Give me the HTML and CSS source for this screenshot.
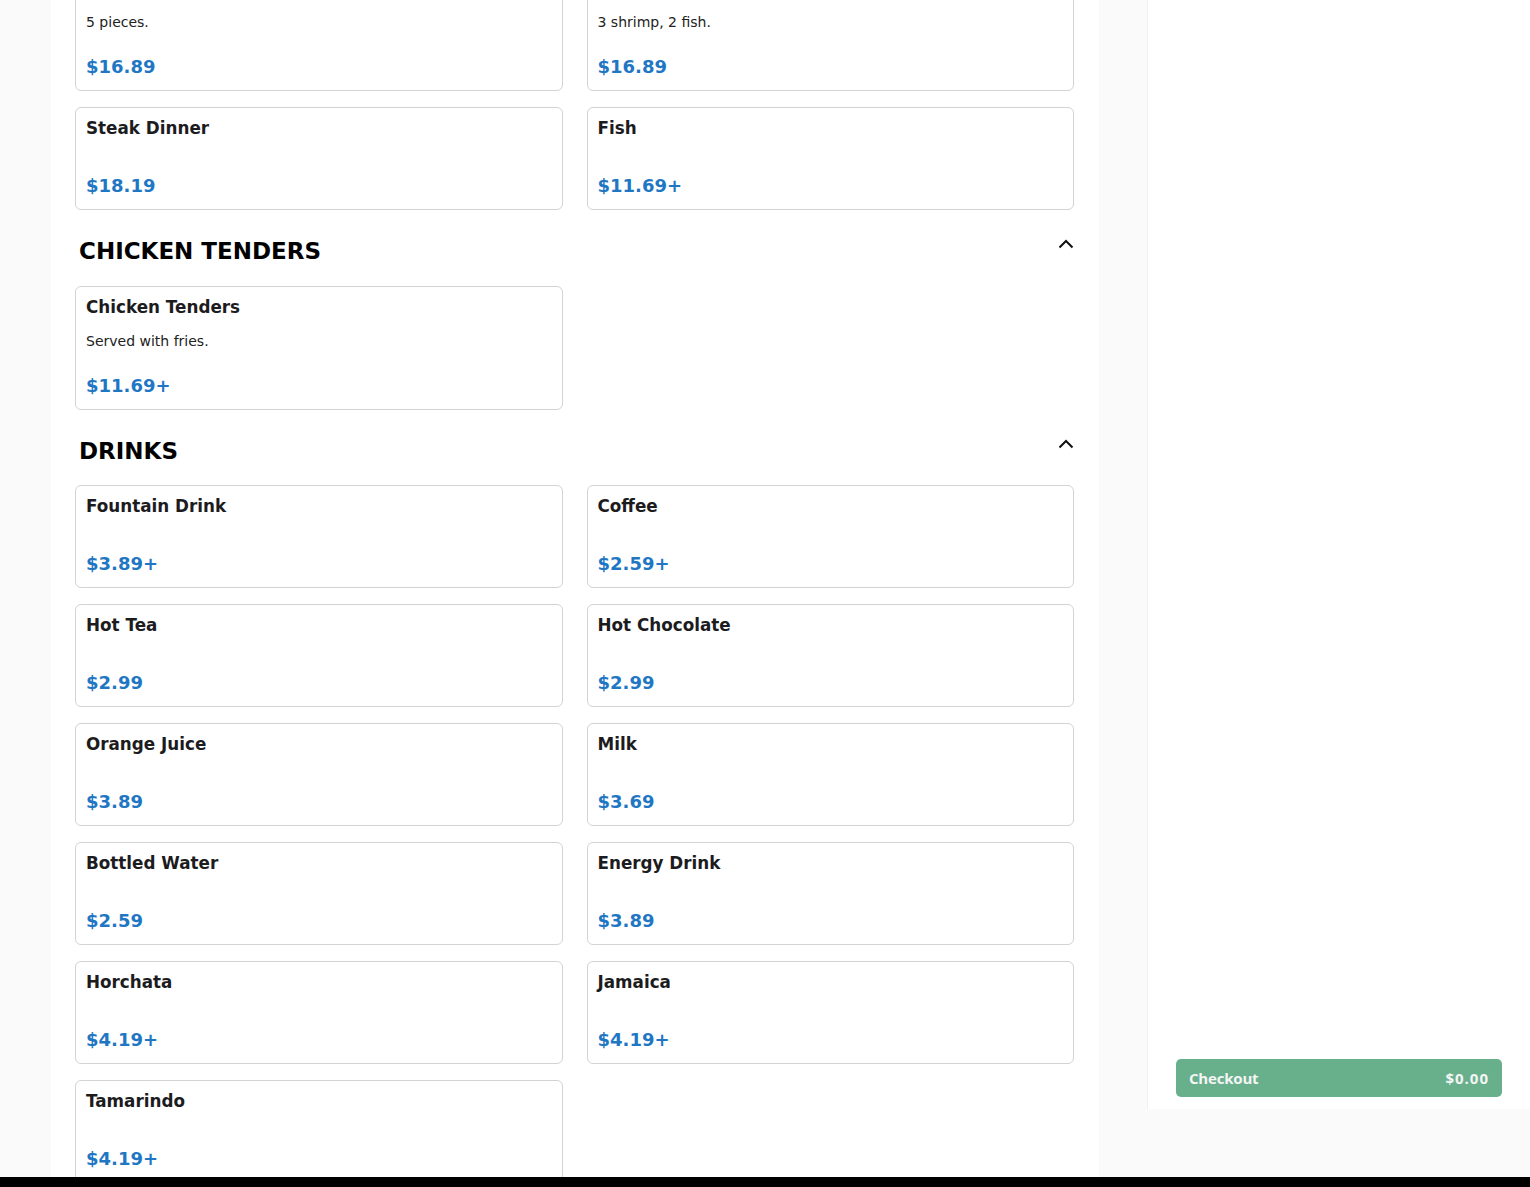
FILE: index.html
```html
<!DOCTYPE html>
<html lang="en">
<head>
<meta charset="utf-8">
<title>Menu</title>
<link rel="stylesheet" href="styles.css">
</head>
<body>
<div class="viewport">
  <div class="layout">
    <main class="menu">
      <div class="grid first">
        <div class="card">
          <div class="title">Shrimp Dinner</div>
          <div class="desc">5 pieces.</div>
          <div class="price">$16.89</div>
        </div>
        <div class="card">
          <div class="title">Combo Dinner</div>
          <div class="desc">3 shrimp, 2 fish.</div>
          <div class="price">$16.89</div>
        </div>
        <div class="card">
          <div class="title">Steak Dinner</div>
          <div class="price">$18.19</div>
        </div>
        <div class="card">
          <div class="title">Fish</div>
          <div class="price">$11.69+</div>
        </div>
      </div>

      <section class="category">
        <div class="cat-head">
          <h2>CHICKEN TENDERS</h2>
          <button class="toggle" aria-label="Collapse"><svg width="16" height="10" viewBox="0 0 16 10"><path d="M1.5 8.5 L8 2 L14.5 8.5" fill="none" stroke="#111" stroke-width="2"/></svg></button>
        </div>
        <div class="grid">
          <div class="card">
            <div class="title">Chicken Tenders</div>
            <div class="desc">Served with fries.</div>
            <div class="price">$11.69+</div>
          </div>
        </div>
      </section>

      <section class="category drinks">
        <div class="cat-head">
          <h2>DRINKS</h2>
          <button class="toggle" aria-label="Collapse"><svg width="16" height="10" viewBox="0 0 16 10"><path d="M1.5 8.5 L8 2 L14.5 8.5" fill="none" stroke="#111" stroke-width="2"/></svg></button>
        </div>
        <div class="grid">
          <div class="card"><div class="title">Fountain Drink</div><div class="price">$3.89+</div></div>
          <div class="card"><div class="title">Coffee</div><div class="price">$2.59+</div></div>
          <div class="card"><div class="title">Hot Tea</div><div class="price">$2.99</div></div>
          <div class="card"><div class="title">Hot Chocolate</div><div class="price">$2.99</div></div>
          <div class="card"><div class="title">Orange Juice</div><div class="price">$3.89</div></div>
          <div class="card"><div class="title">Milk</div><div class="price">$3.69</div></div>
          <div class="card"><div class="title">Bottled Water</div><div class="price">$2.59</div></div>
          <div class="card"><div class="title">Energy Drink</div><div class="price">$3.89</div></div>
          <div class="card"><div class="title">Horchata</div><div class="price">$4.19+</div></div>
          <div class="card"><div class="title">Jamaica</div><div class="price">$4.19+</div></div>
          <div class="card"><div class="title">Tamarindo</div><div class="price">$4.19+</div></div>
        </div>
      </section>
    </main>

    <aside class="cart">
      <button class="checkout"><span class="label">Checkout</span><span class="amount">$0.00</span></button>
    </aside>
  </div>
</div>
<div class="bottom-bar"></div>
</body>
</html>
```

FILE: styles.css
```css
html, body {
  margin: 0;
  padding: 0;
}
body {
  background: #fafafa;
  font-family: "DejaVu Sans", sans-serif;
  overflow: hidden;
  height: 1187px;
}
.viewport {
  height: 1177px;
  overflow: hidden;
}
.layout {
  display: flex;
  align-items: flex-start;
  height: 100%;
}
.menu {
  margin-left: 51px;
  width: 1048px;
  box-sizing: border-box;
  padding: 0 25px 0 24px;
  background: #fff;
  height: 100%;
}
.grid {
  display: grid;
  grid-template-columns: 1fr 1fr;
  gap: 16px 24px;
}
.first {
  margin-top: -33px;
}
.card {
  border: 1px solid #d3d3d3;
  border-radius: 6px;
  padding: 10px 10px 11px;
  background: #fff;
}
.title {
  font-weight: bold;
  font-size: 16.8px;
  line-height: 20px;
  color: #1c1c1e;
}
.desc {
  margin-top: 14px;
  font-size: 14px;
  line-height: 20px;
  color: #222;
}
.price {
  margin-top: 23px;
  font-weight: bold;
  font-size: 18px;
  line-height: 24px;
  color: #1f77c4;
}
.title + .price {
  margin-top: 36px;
}
.category {
  margin-top: 26px;
}
.cat-head {
  display: flex;
  justify-content: space-between;
  align-items: flex-start;
  padding: 0 0 0 4px;
  height: 30px;
  margin-bottom: 20px;
}
.drinks .cat-head {
  margin-bottom: 19px;
}
.cat-head h2 {
  margin: 0;
  font-size: 23px;
  line-height: 30px;
  font-weight: bold;
  color: #000;
}
.toggle {
  border: 0;
  background: transparent;
  padding: 0;
  margin: 3px 0 0 0;
  width: 16px;
  height: 10px;
  display: block;
}
.toggle svg {
  display: block;
}
.cart {
  margin-left: 48px;
  width: 383px;
  height: 1109px;
  box-sizing: border-box;
  background: #fff;
  border-left: 1px solid #f0f0f0;
  display: flex;
  flex-direction: column;
  justify-content: flex-end;
  padding: 0 28px 12px 28px;
}
.checkout {
  display: flex;
  justify-content: space-between;
  align-items: center;
  height: 38px;
  padding: 0 13px;
  border: 0;
  border-radius: 5px;
  background: #68b08c;
  color: #f5f5f5;
  font-family: "Open Sans", sans-serif;
  font-weight: 700;
  font-size: 15px;
}
.checkout .label {
  letter-spacing: -0.2px;
}
.checkout .amount {
  letter-spacing: 1px;
}
.bottom-bar {
  height: 10px;
  background: #000;
}
```
